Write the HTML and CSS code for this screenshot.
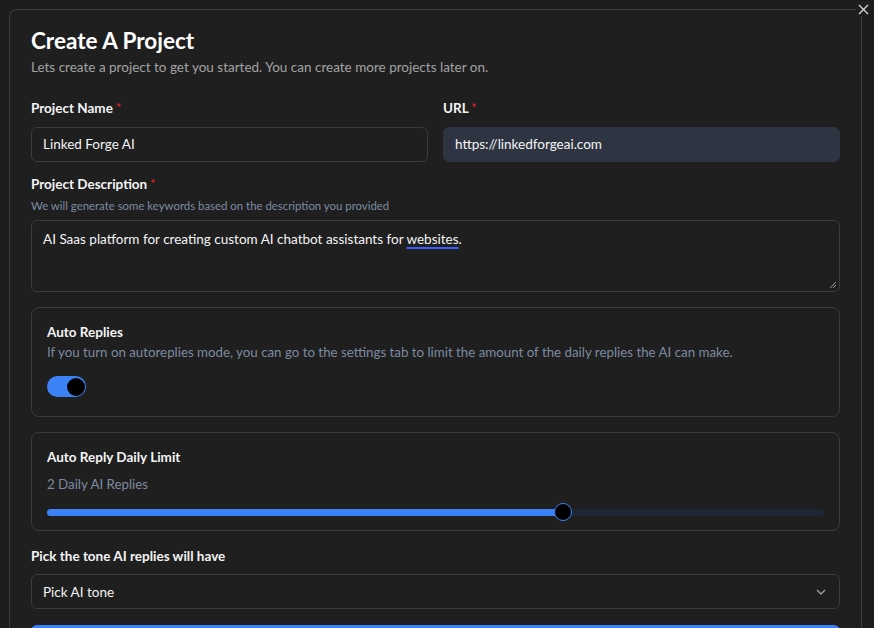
FILE: index.html
```html
<!DOCTYPE html>
<html>
<head>
<meta charset="utf-8">
<link rel="stylesheet" href="styles.css">
</head>
<body>
<div class="dialog">
  <button class="close" aria-label="Close">
    <svg width="11" height="11" viewBox="0 0 11 11"><path d="M1 1L10 10M10 1L1 10" stroke="#d4d4d4" stroke-width="1.4" fill="none"/></svg>
  </button>
  <h1 class="title">Create A Project</h1>
  <p class="subtitle">Lets create a project to get you started. You can create more projects later on.</p>

  <div class="row">
    <div class="field">
      <label class="label">Project Name <span class="req">*</span></label>
      <div class="input">Linked Forge AI</div>
    </div>
    <div class="field">
      <label class="label">URL <span class="req">*</span></label>
      <div class="input filled">https://linkedforgeai.com</div>
    </div>
  </div>

  <div class="desc">
    <label class="label">Project Description <span class="req">*</span></label>
    <p class="help">We will generate some keywords based on the description you provided</p>
    <div class="textarea">AI Saas platform for creating custom AI chatbot assistants for <span class="spell">websites</span>.
      <svg class="grip" width="8" height="8" viewBox="0 0 8 8"><path d="M7 1L1 7M7 4L4 7" stroke="#9a9a9a" stroke-width="1" fill="none"/></svg>
    </div>
  </div>

  <div class="card">
    <h3 class="card-title">Auto Replies</h3>
    <p class="card-text">If you turn on autoreplies mode, you can go to the settings tab to limit the amount of the daily replies the AI can make.</p>
    <div class="toggle"><span class="knob"></span></div>
  </div>

  <div class="card limit">
    <h3 class="card-title">Auto Reply Daily Limit</h3>
    <p class="card-text count">2 Daily AI Replies</p>
    <div class="slider">
      <div class="track"><div class="fill" style="width: 66.4%"></div></div>
      <span class="thumb" style="left: 66.4%"></span>
    </div>
  </div>

  <label class="label tone">Pick the tone AI replies will have</label>
  <div class="select">
    <span>Pick AI tone</span>
    <svg width="10" height="6" viewBox="0 0 10 6"><path d="M1 1L5 5L9 1" stroke="#a3a3a3" stroke-width="1.3" fill="none"/></svg>
  </div>

  <button class="submit" aria-label="Create Project"></button>
</div>
</body>
</html>
```

FILE: styles.css
```css
html, body {
  margin: 0;
  padding: 0;
  height: 100%;
  overflow: hidden;
  background: #1d1d1d;
  font-family: "Lato", "Inter", sans-serif;
  color: #f4f4f5;
}

.dialog {
  position: relative;
  margin: 9px 0 0 9px;
  width: 809px;
  height: 700px;
  padding: 17px 21px 0 21px;
  border: 1px solid #3b3b3b;
  border-radius: 8px 0 0 0;
  background: #1f1f1f;
}

.close {
  position: absolute;
  top: -8px;
  right: -9px;
  width: 14px;
  height: 14px;
  padding: 0;
  border: 0;
  background: #1f1f1f;
  display: flex;
  align-items: center;
  justify-content: center;
}

.title {
  margin: 0;
  font-size: 22.5px;
  line-height: 28px;
  font-weight: 700;
  color: #ffffff;
}

.subtitle {
  margin: 3px 0 0;
  font-size: 13.5px;
  line-height: 18px;
  color: #a3a3a3;
}

.row {
  display: grid;
  grid-template-columns: 1fr 1fr;
  gap: 15px;
  margin-top: 23px;
}

.field {
  display: flex;
  flex-direction: column;
}

.label {
  display: block;
  font-size: 13.5px;
  line-height: 18px;
  font-weight: 700;
  color: #f4f4f5;
}

.req {
  color: #e11d2a;
  font-size: 11px;
  vertical-align: top;
}

.input {
  margin-top: 10px;
  height: 33px;
  padding: 0 11px;
  border: 1px solid #3b3b3b;
  border-radius: 6px;
  font-size: 13.5px;
  line-height: 33px;
  color: #f4f4f5;
}

.input.filled {
  background: #2e3441;
  border-color: #2e3441;
}

.desc {
  margin-top: 13px;
}

.help {
  margin: 5px 0 0;
  font-size: 11.4px;
  line-height: 16px;
  color: #7d8ba1;
}

.textarea {
  position: relative;
  margin-top: 6px;
  height: 52px;
  padding: 9px 11px;
  border: 1px solid #3b3b3b;
  border-radius: 6px;
  font-size: 13.5px;
  line-height: 18px;
  color: #f4f4f5;
}

.spell {
  text-decoration: underline;
  text-decoration-color: #3b5bff;
  text-decoration-thickness: 2px;
  text-underline-offset: 3px;
}

.grip {
  position: absolute;
  right: 2px;
  bottom: 2px;
}

.card {
  margin-top: 15px;
  padding: 15px 15px 19px;
  border: 1px solid #3b3b3b;
  border-radius: 8px;
}

.card-title {
  margin: 0;
  font-size: 13.5px;
  line-height: 18px;
  font-weight: 700;
  color: #f4f4f5;
}

.card-text {
  margin: 2px 0 0;
  font-size: 13.3px;
  line-height: 18px;
  color: #7d8ba1;
}

.toggle {
  margin-top: 15px;
  width: 39px;
  height: 21px;
  border-radius: 11px;
  background: #3b82f6;
  display: flex;
  align-items: center;
  justify-content: flex-end;
  padding-right: 1px;
  box-sizing: border-box;
}

.knob {
  width: 18px;
  height: 18px;
  border-radius: 50%;
  background: #000;
}

.limit {
  padding-bottom: 9px;
}

.count {
  margin-top: 9px;
}

.slider {
  position: relative;
  margin-top: 10px;
  height: 18px;
  display: flex;
  align-items: center;
}

.track {
  width: 100%;
  height: 7px;
  border-radius: 4px;
  background: #1e2636;
  overflow: hidden;
}

.fill {
  height: 100%;
  background: #3b82f6;
}

.thumb {
  position: absolute;
  top: 0;
  width: 16px;
  height: 16px;
  margin-left: -9px;
  border-radius: 50%;
  background: #000;
  border: 1px solid #3b82f6;
}

.tone {
  margin-top: 16px;
}

.select {
  margin-top: 9px;
  height: 33px;
  padding: 0 13px 0 11px;
  border: 1px solid #3b3b3b;
  border-radius: 6px;
  display: flex;
  align-items: center;
  justify-content: space-between;
  font-size: 13.5px;
  color: #f4f4f5;
}

.submit {
  display: block;
  width: 100%;
  margin-top: 16px;
  height: 40px;
  border: 0;
  border-radius: 6px;
  background: #3b82f6;
}
```
